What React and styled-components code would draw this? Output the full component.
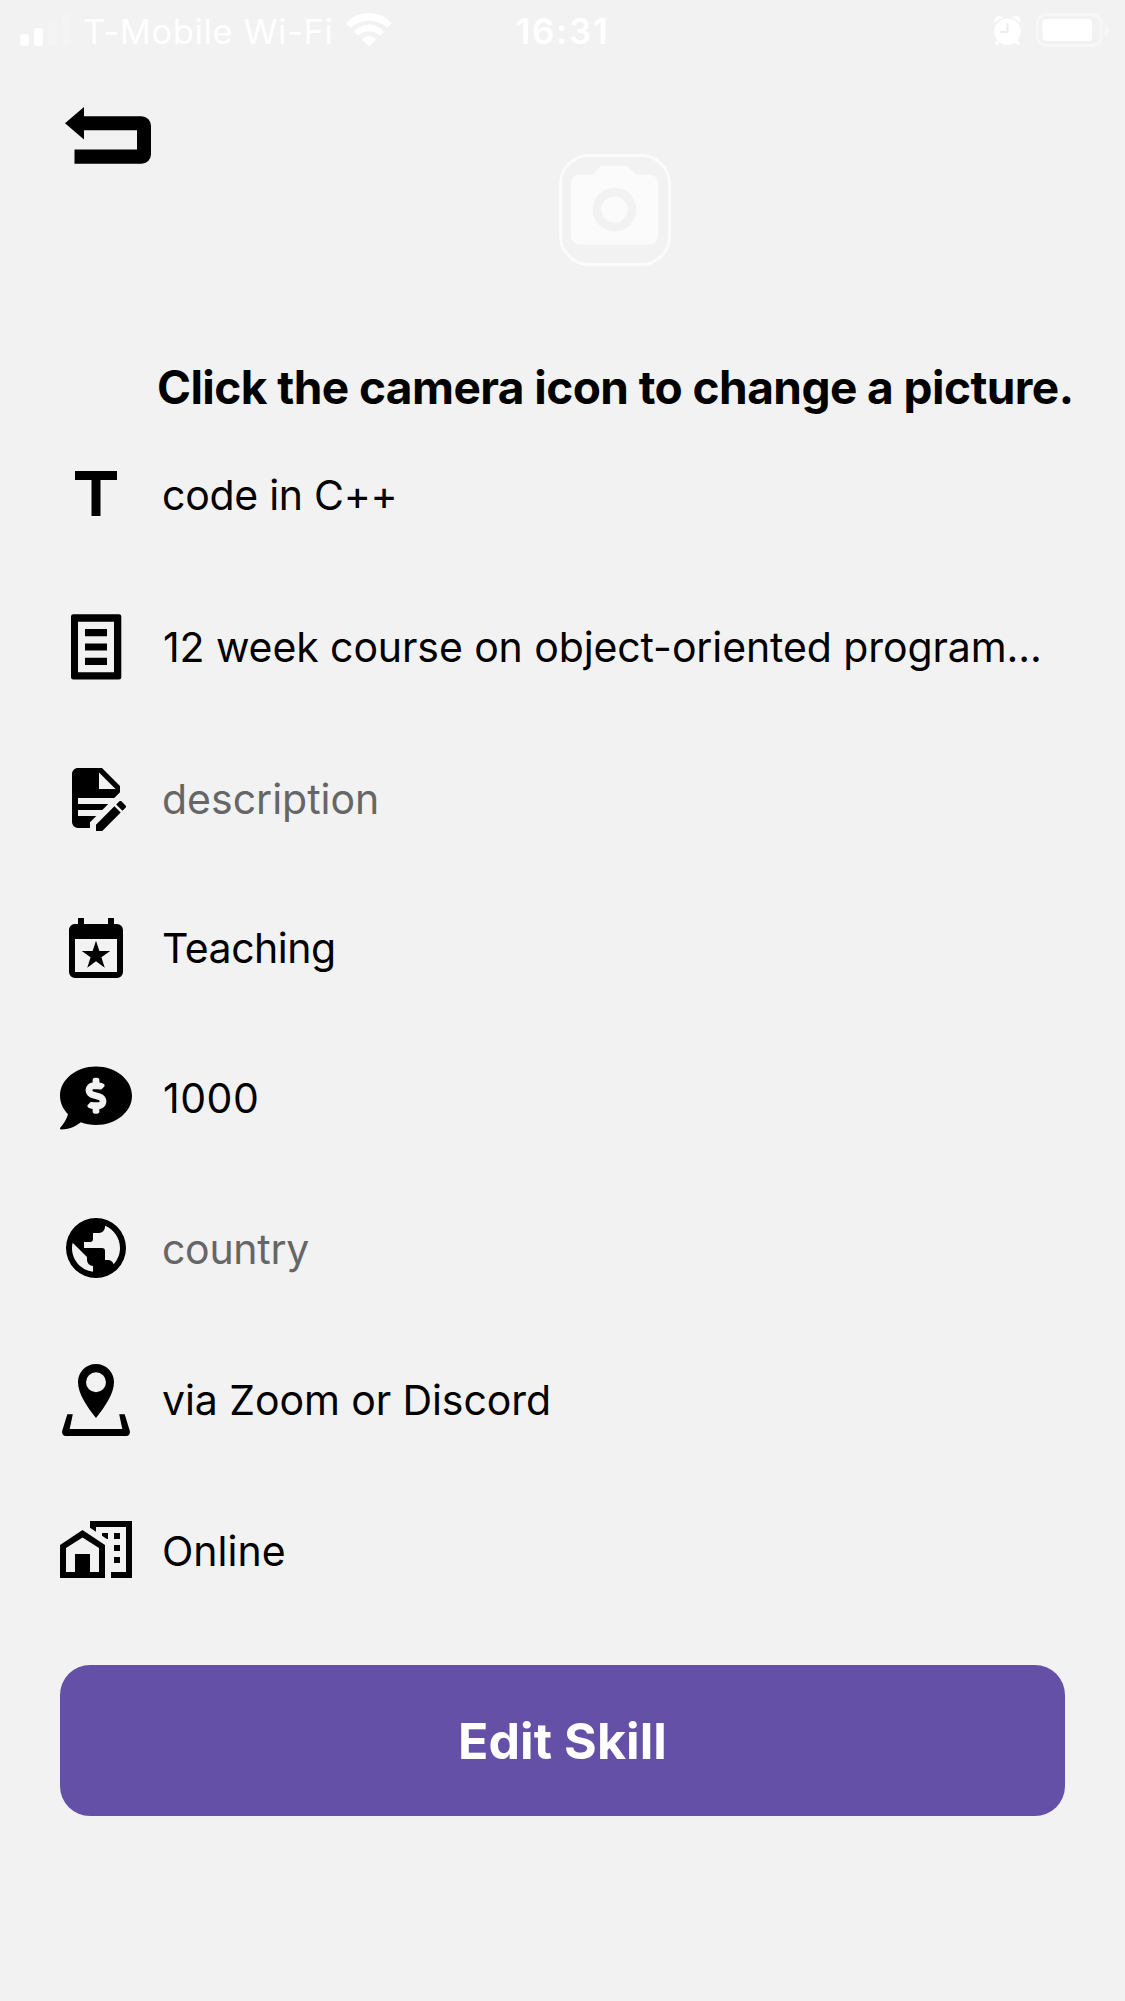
import React from "react";
import styled, { createGlobalStyle } from "styled-components";

const GlobalStyle = createGlobalStyle`
  *, *::before, *::after { box-sizing: border-box; }
  body {
    margin: 0;
    background: #f2f2f2;
    font-family: Inter, "Liberation Sans", sans-serif;
    color: #000;
  }
  svg { display: block; flex: none; }
`;

const Screen = styled.div`
  width: 1125px;
  height: 2001px;
  overflow: hidden;
  display: flex;
  flex-direction: column;
  background: #f2f2f2;
`;

const StatusBar = styled.header`
  height: 62px;
  flex: none;
  display: grid;
  grid-template-columns: 1fr auto 1fr;
  color: #fff;
  font-size: 35px;
  line-height: 63px;
`;

const StatusGroup = styled.div`
  display: flex;
  align-items: flex-start;
  justify-content: ${(p) => (p.$end ? "flex-end" : "flex-start")};
  padding: ${(p) => (p.$end ? "0 15px 0 0" : "0 0 0 20px")};
`;

const Carrier = styled.span`
  width: 273px;
  padding-left: 10px;
  font-size: 34.5px;
  letter-spacing: 0.6px;
  white-space: nowrap;
`;

const Clock = styled.time`
  font-weight: 600;
  letter-spacing: 1.7px;
`;

const TopArea = styled.div`
  height: 296px;
  flex: none;
  display: flex;
  align-items: flex-start;
  padding: 45px 0 0 65px;
`;

const IconButton = styled.button`
  padding: 0;
  border: 0;
  background: none;
  color: inherit;
`;

const CameraButton = styled(IconButton)`
  display: flex;
  align-items: flex-start;
  width: 112px;
  height: 112px;
  margin: 47px 0 0 408px;
  border: 3px solid #fff;
  border-radius: 30px;
  opacity: 0.7;
  color: #fff;
`;

const Hint = styled.h1`
  margin: 0;
  flex: none;
  padding: 1px 0 0 157px;
  font-size: 46px;
  line-height: 57px;
  font-weight: 700;
  letter-spacing: -0.56px;
  white-space: nowrap;
`;

const Fields = styled.div`
  display: flex;
  flex-direction: column;
  margin-top: 43px;
  padding-left: 60px;
`;

const Field = styled.div`
  height: 72px;
  display: flex;
  align-items: center;
  margin-bottom: ${(p) => p.$gap}px;
`;

const Value = styled.span`
  margin-left: ${(p) => (p.$numeric ? 31 : 30)}px;
  padding-top: ${(p) => p.$lower || 0}px;
  padding-bottom: ${(p) => p.$raise || 0}px;
  font-size: 41px;
  line-height: 60px;
  letter-spacing: ${(p) => p.$tracking || 0}px;
  color: ${(p) => (p.$placeholder ? "#666" : "#000")};
  white-space: nowrap;
`;

const SubmitButton = styled.button`
  flex: none;
  height: 151px;
  margin: 0 60px;
  padding: 0;
  border: 0;
  border-radius: 30px;
  background: #6550a7;
  color: #fff;
  font: 700 50px/60px Inter, "Liberation Sans", sans-serif;
  letter-spacing: 0.1px;
`;

const Glyph = ({ size = 72, box = "0 0 24 24", children }) => (
  <svg width={size} height={size} viewBox={box} fill="currentColor" aria-hidden="true">
    {children}
  </svg>
);

const SignalIcon = () => (
  <svg width="53" height="62" viewBox="0 0 53 62" fill="#fff">
    <rect x="0" y="34" width="9" height="12" rx="3" />
    <rect x="14" y="28" width="9" height="18" rx="3" />
    <rect x="28" y="21" width="9" height="25" rx="3" opacity="0.2" />
    <rect x="42" y="14" width="9" height="32" rx="3" opacity="0.2" />
  </svg>
);

const WifiIcon = () => (
  <svg width="46" height="62" viewBox="0 0 46 62" fill="#fff">
    <path d="M.5 23Q9.5 13 23 13T45.500 23Q45.500 24 44.500 25L42 27.300Q41 27.800 40 27Q33 20.800 23 20.800T6 27Q5 27.800 4 27.300L1.500 25Q.5 24 .5 23Z" />
    <path d="M8.500 31Q14.500 24.500 23 24.500T37.500 31Q37.700 32 37 32.700L34.500 35Q33.500 35.600 32.500 34.800Q28.500 31.600 23 31.600T13.500 34.800Q12.500 35.600 11.500 35L9 32.700Q8.300 32 8.500 31Z" />
    <path d="M16.300 39Q19 36 23 36T29.700 39Q30 40 29.300 40.600L24 45.600Q23 46.400 22 45.600L16.700 40.600Q16 40 16.300 39Z" />
  </svg>
);

const AlarmIcon = () => (
  <svg width="42" height="62" viewBox="0 0 42 62" fill="none">
    <path
      d="M.6 22.500Q0 16 6 16Q8.500 16 9.300 17.800Q4 19.500 1.500 22.500ZM26.400 22.500Q27 16 21 16Q18.500 16 17.700 17.800Q23 19.500 25.500 22.500Z"
      fill="#fff"
      opacity=".85"
    />
    <path d="M2.500 43.500L6 40M24.500 43.500L21 40" stroke="#fff" strokeWidth="3" strokeLinecap="round" />
    <circle cx="13.500" cy="31.700" r="13.200" fill="#fff" />
    <path d="M13.500 24V32H7" stroke="#ededed" strokeWidth="2" strokeLinecap="round" />
  </svg>
);

const BatteryIcon = () => (
  <svg width="74" height="62" viewBox="0 0 74 62">
    <rect x="1.500" y="14.500" width="63.500" height="31" rx="8.500" fill="none" stroke="#fff" strokeWidth="3" opacity=".4" />
    <rect x="6.500" y="19" width="49.500" height="22" rx="4" fill="#fff" />
    <path d="M69 24Q73 26.500 73 30T69 36Z" fill="#fff" opacity=".4" />
  </svg>
);

const BackIcon = () => (
  <svg width="86" height="57" viewBox="0 0 86 57" fill="currentColor">
    <path d="M0 16.300L19 0V9.200H76.500A9.500 9.500 0 0 1 86 18.700V47.200A9.500 9.500 0 0 1 76.500 56.700H9.500V42.500H72V23.300H19V32.500Z" />
  </svg>
);

const CameraIcon = () => (
  <Glyph size={105}>
    <path d="M4 4H7L9 2H15L17 4H20A2 2 0 0 1 22 6V18A2 2 0 0 1 20 20H4A2 2 0 0 1 2 18V6A2 2 0 0 1 4 4M12 7A5 5 0 0 0 7 12A5 5 0 0 0 12 17A5 5 0 0 0 17 12A5 5 0 0 0 12 7M12 9A3 3 0 0 1 15 12A3 3 0 0 1 12 15A3 3 0 0 1 9 12A3 3 0 0 1 12 9Z" />
  </Glyph>
);

const TitleIcon = () => (
  <Glyph>
    <path d="M5 4V7H10.500V19H13.500V7H19V4H5Z" />
  </Glyph>
);

const ArticleIcon = () => (
  <Glyph box="0 0 72 72">
    <path
      fillRule="evenodd"
      d="M13.300 3.300H59A2.300 2.300 0 0 1 61.300 5.600V66.300A2.300 2.300 0 0 1 59 68.600H13.300A2.300 2.300 0 0 1 11 66.300V5.600A2.300 2.300 0 0 1 13.300 3.300ZM18 10.800V61.300H54V10.800Z"
    />
    <path d="M25 18H47V25.200H25ZM25 32.400H47V39.600H25ZM25 46.800H47V54H25Z" />
  </Glyph>
);

const DocumentEditIcon = () => (
  <Glyph>
    <path d="M6 2C4.890 2 4 2.900 4 4V20A2 2 0 0 0 6 22H10V20.090L12.090 18H6V16H14.090L16.090 14H6V12H18.090L20 10.090V8L14 2H6M13 3.500L18.500 9H13V3.500M20.150 13C20 13 19.860 13.050 19.750 13.160L18.730 14.180L20.820 16.260L21.840 15.250C22.050 15.030 22.050 14.670 21.840 14.460L20.540 13.160C20.430 13.050 20.290 13 20.150 13M18.140 14.770L12 20.920V23H14.080L20.230 16.850L18.140 14.770Z" />
  </Glyph>
);

const CalendarStarIcon = () => (
  <Glyph>
    <path d="M19 19H5V8H19M16 1V3H8V1H6V3H5C3.890 3 3 3.890 3 5V19A2 2 0 0 0 5 21H19A2 2 0 0 0 21 19V5A2 2 0 0 0 19 3H18V1M10.880 12H7.270L10.190 14.110L9.080 17.560L12 15.430L14.920 17.560L13.800 14.120L16.720 12H13.120L12 8.560L10.880 12Z" />
  </Glyph>
);

const PriceIcon = () => (
  <Glyph box="0 0 512 512">
    <path d="M256 32C114.620 32 0 125.120 0 240c0 49.560 21.410 95.010 57.020 130.740C44.460 421.050 2.700 465.970 2.200 466.500A7.995 7.995 0 0 0 .69 475.200 7.970 7.970 0 0 0 8 480c66.260 0 115.990-31.750 140.600-51.380C181.290 440.930 217.590 448 256 448c141.380 0 256-93.120 256-208S397.380 32 256 32zm24 302.440V352c0 8.840-7.160 16-16 16h-16c-8.840 0-16-7.160-16-16v-17.730c-11.420-1.350-22.280-5.190-31.780-11.460-6.220-4.110-6.820-13.110-1.550-18.380l17.520-17.520c3.740-3.740 9.310-4.240 14.110-2.030 3.180 1.460 6.660 2.220 10.260 2.220h32.780c4.660 0 8.440-3.780 8.440-8.420 0-3.750-2.520-7.080-6.120-8.110l-50.070-14.300c-22.250-6.350-40.010-24.710-42.910-47.670-4.050-32.070 19.030-59.430 49.320-63.050V128c0-8.840 7.160-16 16-16h16c8.840 0 16 7.160 16 16v17.730c11.420 1.350 22.280 5.190 31.780 11.460 6.220 4.110 6.820 13.110 1.550 18.380l-17.520 17.520c-3.740 3.740-9.310 4.240-14.110 2.030a24.516 24.516 0 0 0-10.260-2.220h-32.780c-4.660 0-8.440 3.780-8.440 8.420 0 3.750 2.520 7.080 6.120 8.110l50.070 14.300c22.250 6.360 40.010 24.710 42.910 47.670 4.050 32.060-19.030 59.420-49.320 63.040z" />
  </Glyph>
);

const GlobeIcon = () => (
  <Glyph>
    <path d="M17.900 17.390C17.640 16.590 16.890 16 16 16H15V13A1 1 0 0 0 14 12H8V10H10A1 1 0 0 0 11 9V7H13A2 2 0 0 0 15 5V4.590C17.930 5.770 20 8.640 20 12C20 14.080 19.200 15.970 17.900 17.390M11 19.930C7.050 19.440 4 16.080 4 12C4 11.380 4.080 10.780 4.210 10.210L9 15V16A2 2 0 0 0 11 18M12 2A10 10 0 0 0 2 12A10 10 0 0 0 12 22A10 10 0 0 0 22 12A10 10 0 0 0 12 2Z" />
  </Glyph>
);

const PlaceIcon = () => (
  <Glyph box="0 0 72 72">
    <path
      fillRule="evenodd"
      d="M36 0C46 0 54 8 54 18C54 29.500 45.500 42 36 54C26.500 42 18 29.500 18 18C18 8 26 0 36 0ZM36 8.200A10 10 0 1 0 36 28.200A10 10 0 1 0 36 8.200Z"
    />
    <path d="M7.300 50.300H12.800L9.700 65H62.300L59.200 50.300H64.700L69.900 67.200Q70.300 72 66 72H6Q1.700 72 2.100 67.200Z" />
  </Glyph>
);

const HomeCityIcon = () => (
  <Glyph>
    <path d="M10 2V4.260L12 5.590V4H22V19H17V21H24V2H10M7.500 5L0 10V21H15V10L7.500 5M14 6V6.930L15.610 8H16V6H14M18 6V8H20V6H18M7.500 7.500L13 11V19H10V13H5V19H2V11L7.500 7.500M18 10V12H20V10H18M18 14V16H20V14H18Z" />
  </Glyph>
);

const FIELDS = [
  { icon: TitleIcon, text: "code in C++", gap: 80, tracking: -0.28 },
  { icon: ArticleIcon, text: "12 week course on object-oriented program...", gap: 79, tracking: -0.1, numeric: true },
  { icon: DocumentEditIcon, text: "description", gap: 81, placeholder: true, lower: 2 },
  { icon: CalendarStarIcon, text: "Teaching", gap: 75, tracking: -0.48, raise: 6 },
  { icon: PriceIcon, text: "1000", gap: 78, tracking: 0.5, numeric: true },
  { icon: GlobeIcon, text: "country", gap: 80, tracking: -0.3, placeholder: true, lower: 2 },
  { icon: PlaceIcon, text: "via Zoom or Discord", gap: 79, tracking: -0.08 },
  { icon: HomeCityIcon, text: "Online", gap: 78 },
];

export default function App() {
  return (
    <>
      <GlobalStyle />
      <Screen>
        <StatusBar>
          <StatusGroup>
            <SignalIcon />
            <Carrier>T-Mobile Wi-Fi</Carrier>
            <WifiIcon />
          </StatusGroup>
          <Clock>16:31</Clock>
          <StatusGroup $end>
            <AlarmIcon />
            <BatteryIcon />
          </StatusGroup>
        </StatusBar>
        <TopArea>
          <IconButton aria-label="Back">
            <BackIcon />
          </IconButton>
          <CameraButton aria-label="Change picture">
            <CameraIcon />
          </CameraButton>
        </TopArea>
        <Hint>Click the camera icon to change a picture.</Hint>
        <Fields>
          {FIELDS.map(({ icon: Icon, text, gap, tracking, raise, lower, numeric, placeholder }) => (
            <Field key={text} $gap={gap}>
              <Icon />
              <Value
                $tracking={tracking}
                $raise={raise}
                $lower={lower}
                $numeric={numeric}
                $placeholder={placeholder}
              >
                {text}
              </Value>
            </Field>
          ))}
        </Fields>
        <SubmitButton>Edit Skill</SubmitButton>
      </Screen>
    </>
  );
}
